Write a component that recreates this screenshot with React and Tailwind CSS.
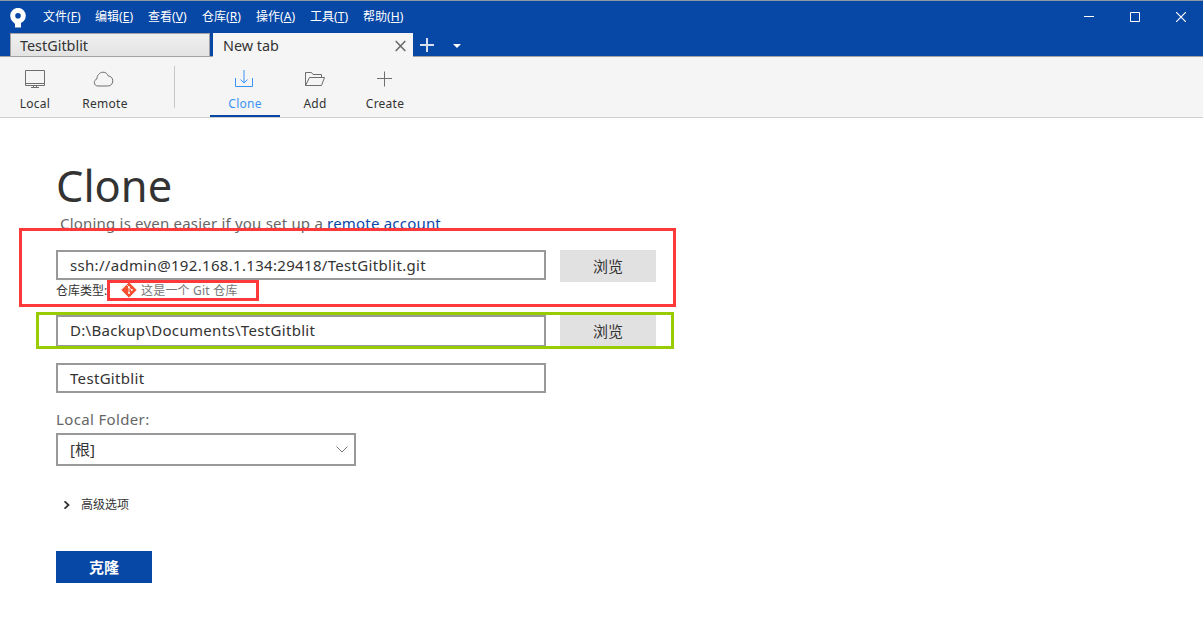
import React from "react";

const menus = [
  { label: "文件", hotkey: "F", width: "w-[52px]" },
  { label: "编辑", hotkey: "E", width: "w-[53px]" },
  { label: "查看", hotkey: "V", width: "w-[54px]" },
  { label: "仓库", hotkey: "R", width: "w-[54px]" },
  { label: "操作", hotkey: "A", width: "w-[54px]" },
  { label: "工具", hotkey: "T", width: "w-[53px]" },
  { label: "帮助", hotkey: "H", width: "w-[54px]" },
];

function LogoIcon() {
  return (
    <svg className="h-[20px] w-[16px]" viewBox="0 0 16 20">
      <circle cx="8" cy="7.700" r="5.300" fill="none" stroke="#fff" strokeWidth="5" />
      <path d="M5 12h6v7.500H5z" fill="#fff" />
      <path d="M5 16l-3.500-4h4z" fill="#fff" />
    </svg>
  );
}

function GitIcon() {
  return (
    <svg className="h-4 w-4 shrink-0" viewBox="0 0 16 16">
      <path d="M8 .8L15.200 8 8 15.200.8 8z" fill="#f4502f" stroke="#f4502f" strokeWidth="1" strokeLinejoin="round" />
      <path d="M5.500 2.500l2.500 2.500V11M8 5.300l2.800 2.700" fill="none" stroke="#fff" strokeWidth=".8" />
      <circle cx="8" cy="5.300" r="1" fill="#fff" />
      <circle cx="8" cy="11" r="1" fill="#fff" />
      <circle cx="10.800" cy="8.100" r="1" fill="#fff" />
    </svg>
  );
}

function TitleBar() {
  return (
    <div className="flex h-8 items-center text-white">
      <div className="w-[43px] pl-[10px] pt-px">
        <LogoIcon />
      </div>
      <div className="flex text-[12px] leading-4 tracking-[0.05px]">
        {menus.map((m) => (
          <div key={m.hotkey} className={"whitespace-nowrap " + m.width}>
            {m.label}(<span className="underline underline-offset-1">{m.hotkey}</span>)
          </div>
        ))}
      </div>
      <div className="-mr-px ml-auto flex">
        <div className="flex w-[46px] justify-center">
          <svg className="h-[10px] w-[10px]" viewBox="0 0 10 10" shapeRendering="crispEdges">
            <path d="M0 4.500h10" stroke="#fff" />
          </svg>
        </div>
        <div className="flex w-[46px] justify-center">
          <svg className="h-[10px] w-[10px]" viewBox="0 0 10 10">
            <path d="M.5.5h9v9h-9z" fill="none" stroke="#fff" />
          </svg>
        </div>
        <div className="flex w-[46px] justify-center">
          <svg className="h-[10px] w-[10px]" viewBox="0 0 10 10">
            <path d="M0 0l10 10M10 0L0 10" stroke="#fff" strokeWidth="1.200" />
          </svg>
        </div>
      </div>
    </div>
  );
}

function TabStrip() {
  return (
    <div className="flex h-6 text-[14.4px] text-[#333]">
      <div className="ml-[10px] h-[23px] w-[200px] border border-b-0 border-[#a3a3a3] bg-linear-to-b from-[#f0f0f0] to-[#e3e3e3] pl-[9px] leading-[23px]">
        TestGitblit
      </div>
      <div className="relative z-10 ml-[3px] flex h-6 w-[200px] items-center bg-[#f5f5f5] pl-[10px] pr-[7px]">
        <span className="pt-px leading-6">New tab</span>
        <svg className="ml-auto mt-px h-[12px] w-[11px]" viewBox="0 0 11 12">
          <path d="M.7 1l9.600 10M10.300 1L.7 11" stroke="#666" strokeWidth="1.500" />
        </svg>
      </div>
      <svg className="ml-[7px] mt-[5px] h-[14px] w-[14px]" viewBox="0 0 14 14">
        <path d="M0 7h14M7 0v14" stroke="#d6e0f0" strokeWidth="2" />
      </svg>
      <svg className="ml-[19px] mt-[11px] h-[4px] w-[8px]" viewBox="0 0 8 4">
        <path d="M0 0h8L4 4z" fill="#fff" />
      </svg>
    </div>
  );
}

function ToolButton({ label, active, children }) {
  return (
    <div
      className={
        "flex w-[70px] flex-col items-center border-b-2 pt-[11px] text-[12px] tracking-[0.25px] " +
        (active ? "border-[#0747a6] text-[#3b94f4]" : "border-transparent text-[#333]")
      }
    >
      <svg
        className="h-[22px] w-[24px]"
        viewBox="0 0 24 22"
        fill="none"
        stroke={active ? "#3b94f4" : "#6e6e6e"}
        strokeWidth="1"
      >
        {children}
      </svg>
      <span className="mt-[6px] leading-4">{label}</span>
    </div>
  );
}

function Toolbar() {
  return (
    <div className="flex h-[61px] border-b border-[#d0d0d0] bg-[#f5f5f5]">
      <ToolButton label="Local">
        <path d="M2.500 2.500h19v15h-19zM2.500 15.500h19M10.500 17.500v2M13.500 17.500v2M8 19.500h8" />
      </ToolButton>
      <ToolButton label="Remote">
        <path d="M5 18C2.800 18 1.300 16.500 1.300 14.500c0-1.600 1-3 2.600-3.500C3.900 7.500 6.500 4.200 10 4.200c2.600 0 4.500 1.500 5.300 3.800 2.500.2 4.500 2 4.500 4.800 0 3.200-2.200 5.200-5 5.200z" />
      </ToolButton>
      <div className="w-[70px] pl-[34px]">
        <div className="mt-[9px] h-[42px] w-px bg-[#c8c8c8]" />
      </div>
      <ToolButton label="Clone" active>
        <path d="M2.500 10v8.500h17V10M11 2v13M7.500 11.500L11 15l3.500-3.500" />
      </ToolButton>
      <ToolButton label="Add">
        <path d="M2.500 17.500v-13h6l1.500 2h8.500v3M2.500 17.500l4-8h15l-3 8z" />
      </ToolButton>
      <ToolButton label="Create">
        <path d="M11.500 3.500v15M4 10.500h15" />
      </ToolButton>
    </div>
  );
}

function TextBox({ className, children }) {
  return (
    <div className={"flex w-[490px] items-center whitespace-nowrap border-2 border-[#999] bg-white pl-3 text-[15px] tracking-[0.32px] text-[#333] " + className}>
      {children}
    </div>
  );
}

function BrowseButton() {
  return (
    <div className="ml-[14px] flex h-8 w-24 items-center justify-center bg-[#e1e1e1] pt-px text-[15px] text-[#333]">
      浏览
    </div>
  );
}

function CloneForm() {
  return (
    <div className="relative flex h-[503px] flex-col pl-14">
      <h1 className="mt-[38px] h-[56px] text-[43.4px] leading-[60px] text-[#333]">Clone</h1>
      <p className="ml-1 h-[38px] whitespace-nowrap text-[15px] leading-[22px] tracking-[0.2px] text-[#666]">
        Cloning is even easier if you set up a <span className="text-[#0747a6]">remote account</span>
      </p>
      <div className="flex h-8 items-start">
        <TextBox className="h-[30px]">ssh://admin@192.168.1.134:29418/TestGitblit.git</TextBox>
        <BrowseButton />
      </div>
      <div className="-mt-px flex h-[34px] items-start text-[12px] leading-[18px] text-[#333]">
        <span className="w-[65px] whitespace-nowrap pt-px">仓库类型:</span>
        <div className="flex items-start whitespace-nowrap text-[#777]">
          <div className="pt-px">
            <GitIcon />
          </div>
          <span className="ml-[4px] pt-px tracking-[0.2px]">这是一个 Git 仓库</span>
        </div>
      </div>
      <div className="flex h-12">
        <TextBox className="h-8 pb-[2px]">D:\Backup\Documents\TestGitblit</TextBox>
        <BrowseButton />
      </div>
      <TextBox className="h-[30px]">TestGitblit</TextBox>
      <div className="mt-[15px] h-[25px] text-[15px] leading-[22px] tracking-[0.35px] text-[#666]">Local Folder:</div>
      <div className="flex h-[33px] w-[300px] items-center border-2 border-[#999] pl-3 pr-[6px] text-[15px] text-[#333]">
        [根]
        <svg className="ml-auto h-[7px] w-[12px]" viewBox="0 0 12 7">
          <path d="M.5.5L6 6l5.500-5.500" fill="none" stroke="#777" />
        </svg>
      </div>
      <div className="mt-[29px] flex h-5 items-center pl-[8px] text-[12px] text-[#333]">
        <svg className="mr-[11px] h-[8px] w-[6px]" viewBox="0 0 6 8">
          <path d="M.5.300L4.500 4 .5 7.700" fill="none" stroke="#333" strokeWidth="1.800" />
        </svg>
        高级选项
      </div>
      <div className="mt-9 flex h-8 w-24 items-center justify-center bg-[#0747a6] text-[15px] font-bold text-white">
        克隆
      </div>

      {/* highlight frames drawn over the form */}
      <div className="absolute left-[19px] top-[110px] h-[79px] w-[657px] border-3 border-[#ff3939]" />
      <div className="absolute left-[107px] top-[162px] h-[21px] w-[152px] border-3 border-[#ff3939]" />
      <div className="absolute left-[36px] top-[194px] h-[37px] w-[638px] border-3 border-[#99cc00]" />
    </div>
  );
}

export default function App() {
  return (
    <div className="h-[621px] w-[1203px] overflow-hidden bg-white font-['Noto_Sans','Noto_Sans_CJK_SC',sans-serif]">
      <div className="h-[57px] border-b border-t border-t-[#8c98a6] border-b-[#a3a3a3] bg-[#0747a6]">
        <TitleBar />
        <TabStrip />
      </div>
      <Toolbar />
      <CloneForm />
    </div>
  );
}
